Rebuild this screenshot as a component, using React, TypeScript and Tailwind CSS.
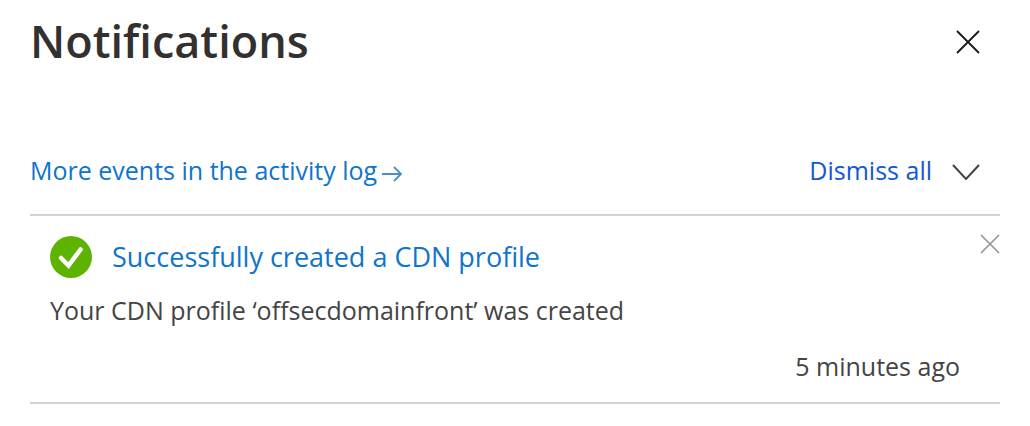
export default function App() {
  return (
    <main className="bg-white px-[30px] pt-[13px] pb-5 font-['Open_Sans','Noto_Sans',sans-serif] text-[#444444]">
      <header className="flex items-start justify-between pr-5">
        <h1 className="text-[45px] leading-[56px] font-semibold text-[#323130]">Notifications</h1>
        <button type="button" aria-label="Close" className="mt-[17px]">
          <svg width="24" height="24" viewBox="0 0 24 24" fill="none" stroke="#1b1a19" strokeWidth="1.8"><path d="M1 1L23 23M23 1L1 23" /></svg>
        </button>
      </header>
      <div className="mt-[85px] flex items-center justify-between border-b-2 border-[#d2d2d2] pr-5 pb-7 text-[25px] leading-8">
        <a href="#activity" className="flex items-center gap-1 text-[#0f74cc]">
          More events in the activity log
          <svg width="22" height="16" viewBox="0 0 22 16" className="mt-2" fill="none" stroke="#4a90c4" strokeWidth="1.8"><path d="M1 8H20M13 1L20 8L13 15" /></svg>
        </a>
        <button type="button" className="flex items-center gap-5 text-[#1259d2]">
          Dismiss all
          <svg width="28" height="16" viewBox="0 0 28 16" className="mt-1" fill="none" stroke="#444444" strokeWidth="2"><path d="M1 1L14 15L27 1" /></svg>
        </button>
      </div>
      <article className="border-b-2 border-[#d2d2d2] pt-[18px] pb-5 pl-5">
        <div className="flex items-start justify-between">
          <div className="flex items-center gap-5 pt-0.5">
            <svg width="42" height="42" viewBox="0 0 42 42"><circle cx="21" cy="21" r="21" fill="#5db300" /><path d="M11 22L18.500 29.500L30.500 13.500" fill="none" stroke="white" strokeWidth="4.500" strokeLinecap="round" /></svg>
            <a href="#profile" className="text-[27px] leading-9 text-[#0f74cc]">Successfully created a CDN profile</a>
          </div>
          <button type="button" aria-label="Dismiss notification">
            <svg width="20" height="20" viewBox="0 0 20 20" fill="none" stroke="#979593" strokeWidth="1.7"><path d="M1 1L19 19M19 1L1 19" /></svg>
          </button>
        </div>
        <p className="mt-4 text-[25px] leading-8">Your CDN profile ‘offsecdomainfront’ was created</p>
        <p className="mt-6 pr-10 text-right text-[25px] leading-8">5 minutes ago</p>
      </article>
    </main>
  );
}
